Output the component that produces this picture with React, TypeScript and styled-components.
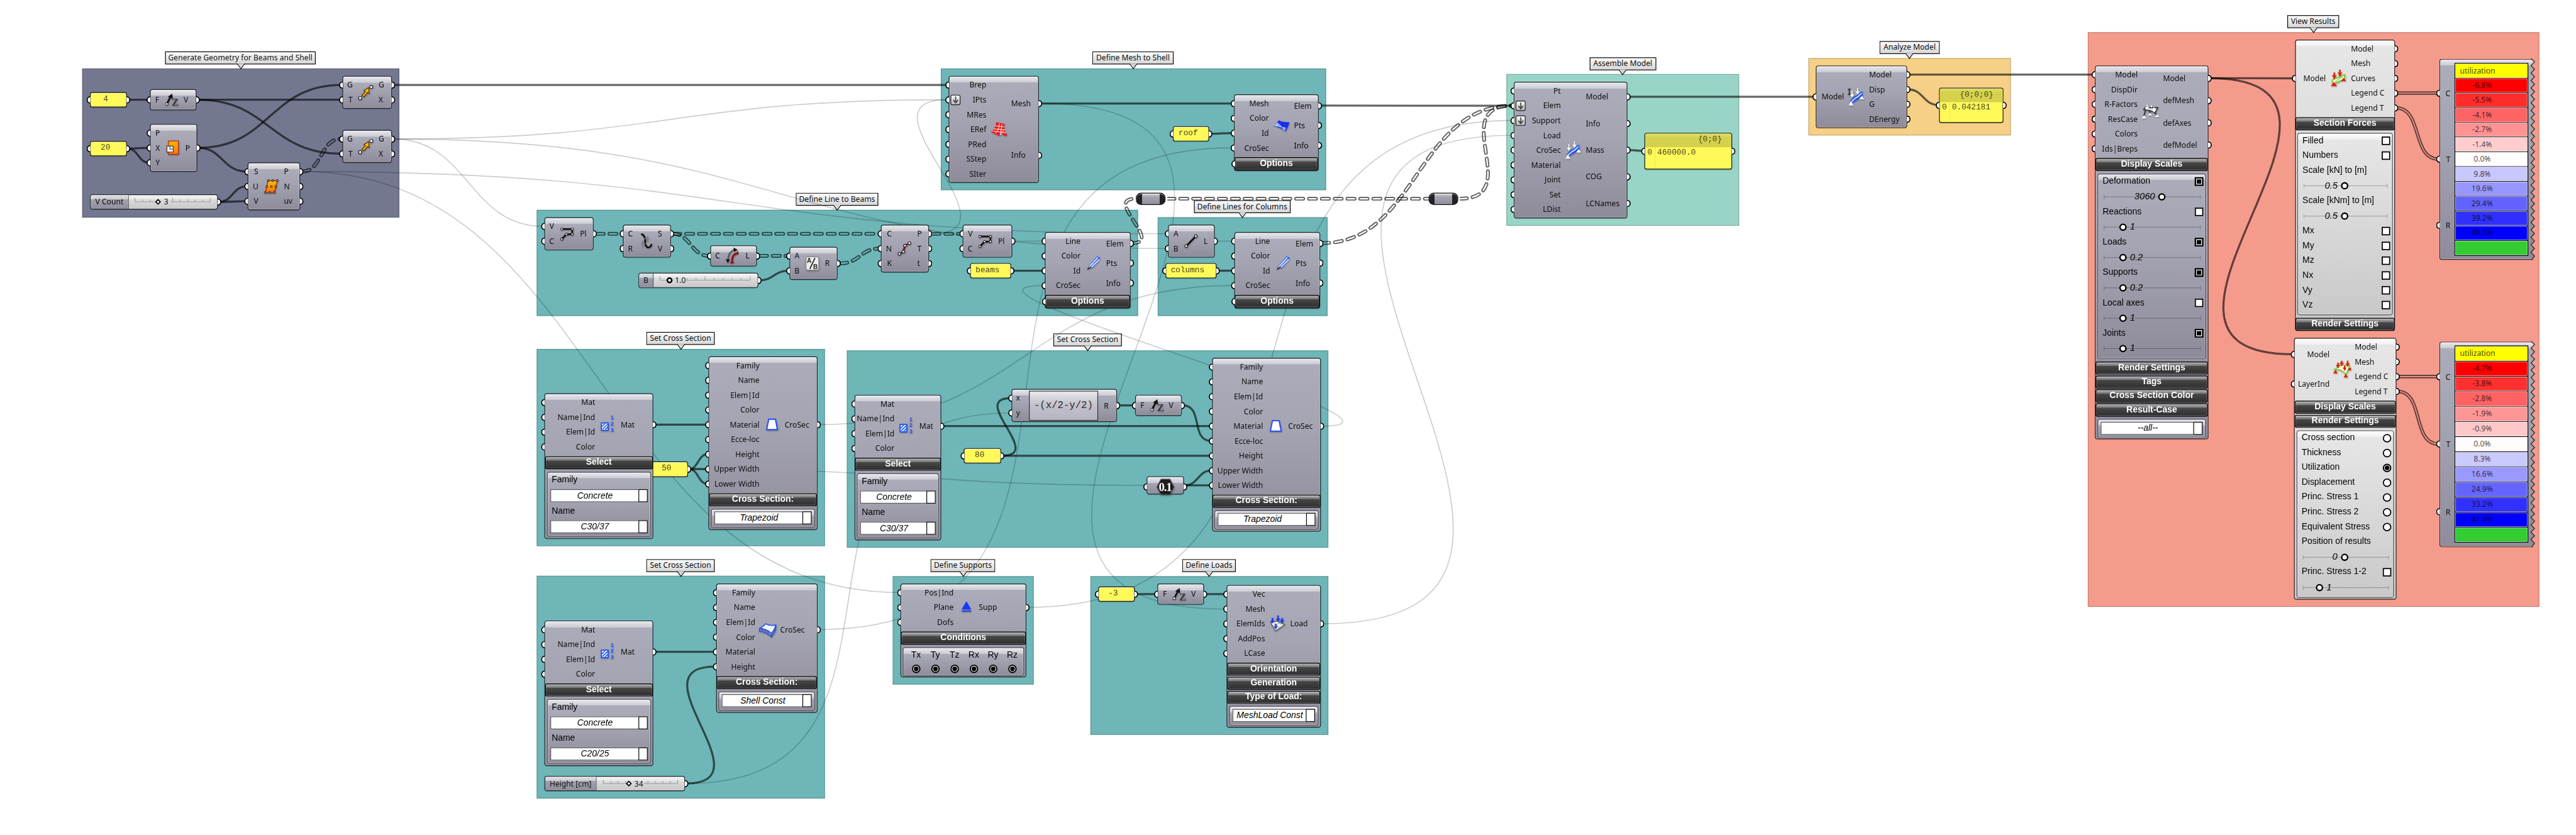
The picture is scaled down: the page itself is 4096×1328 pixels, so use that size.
import React from "react";
import styled, { createGlobalStyle, css } from "styled-components";

const CANVAS_W = 6960;
const CANVAS_H = 2257;
const ZOOM = 4096 / 6960;

const uiFont = `"Noto Sans", "Open Sans", sans-serif`;
const widgetFont = `"Liberation Sans", Arial, sans-serif`;
const monoFont = `"Liberation Mono", "Courier New", monospace`;

const GlobalStyle = createGlobalStyle`
  html, body { margin: 0; padding: 0; background: #fff; overflow: hidden; }
  *, *::before, *::after { box-sizing: border-box; }
`;

/* ---------- canvas ---------- */

const Viewport = styled.main`
  width: 4096px;
  height: 1328px;
  overflow: hidden;
  background: #fff;
`;

const Canvas = styled.div`
  position: relative;
  width: ${CANVAS_W}px;
  height: ${CANVAS_H}px;
  transform: scale(${ZOOM});
  transform-origin: 0 0;
  font: 20.6px/1 ${uiFont};
  color: #0c0c0c;
`;

type Rect = { x: number; y: number; w: number; h: number };

const Group = styled.section<Rect & { $fill: string }>`
  position: absolute;
  left: ${(p) => p.x}px;
  top: ${(p) => p.y}px;
  width: ${(p) => p.w}px;
  height: ${(p) => p.h}px;
  background: ${(p) => p.$fill};
  border: 2px solid rgba(0, 0, 0, 0.2);
`;

const CalloutBox = styled.div<{ $x: number; $y: number; $w: number }>`
  position: absolute;
  left: ${(p) => p.$x}px;
  top: ${(p) => p.$y}px;
  width: ${(p) => p.$w}px;
  height: 35px;
  display: flex;
  align-items: center;
  justify-content: center;
  background: linear-gradient(#fbfbfb, #d6d6d6);
  border: 2px solid #000;
  white-space: nowrap;
  padding-bottom: 2px;
`;

const CalloutTip = styled.svg<{ $left: number }>`
  position: absolute;
  left: ${(p) => p.$left}px;
  top: 31px;
  width: 24px;
  height: 16px;
`;

function Callout({ x, y, w, tip, children }: { x: number; y: number; w: number; tip: number; children: string }) {
  return (
    <CalloutBox $x={x} $y={y} $w={w}>
      {children}
      <CalloutTip $left={tip - x - 14} viewBox="0 0 24 16">
        <path d="M1.5 -1 L12 14 L22.5 -1 Z" fill="#d8d8d8" />
        <path d="M1 0.5 L2.5 1 L12 14 L21.5 1 L23 0.5" fill="none" stroke="#000" strokeWidth="1.8" />
      </CalloutTip>
    </CalloutBox>
  );
}

/* ---------- wires ---------- */

const WireLayer = styled.svg`
  position: absolute;
  left: 0;
  top: 0;
  width: ${CANVAS_W}px;
  height: ${CANVAS_H}px;
`;

type WireKind = "item" | "faint" | "list" | "tree";
type WireSpec = { k: WireKind; a: [number, number]; b: [number, number]; c?: number };

function wirePath({ a, b, c }: WireSpec) {
  const dx = b[0] - a[0];
  const dy = Math.abs(b[1] - a[1]);
  const reach = c ?? (dx < 0 ? -dx * 0.47 : Math.max(dx / 2, dy > dx ? dy * 0.71 : dx / 2));
  return `M${a[0]} ${a[1]} C${a[0] + reach} ${a[1]} ${b[0] - reach} ${b[1]} ${b[0]} ${b[1]}`;
}

function Wire({ spec, id }: { spec: WireSpec; id: string }) {
  const d = wirePath(spec);
  if (spec.k === "item") return <path d={d} fill="none" stroke="#000" strokeOpacity="0.6" strokeWidth="5.6" />;
  if (spec.k === "faint") return <path d={d} fill="none" stroke="#000" strokeOpacity="0.2" strokeWidth="2.8" />;
  const tree = spec.k === "tree";
  const dash = tree ? { strokeDasharray: "19 15.8", strokeLinecap: "round" as const } : {};
  return (
    <g>
      <mask id={id} maskUnits="userSpaceOnUse" x="0" y="0" width={CANVAS_W} height={CANVAS_H}>
        <path d={d} fill="none" stroke="#fff" strokeWidth={tree ? 10.5 : 9.4} {...dash} />
        <path d={d} fill="none" stroke="#000" strokeWidth={tree ? 3.8 : 2.6} {...dash} />
      </mask>
      <path d={d} fill="none" stroke="#000" strokeOpacity="0.6" strokeWidth="12" mask={`url(#${id})`} />
    </g>
  );
}

const wires: WireSpec[] = [
  { k: "item", a: [345, 269.6], b: [402, 269.6] },
  { k: "item", a: [534, 269.6], b: [922, 269.6] },
  { k: "item", a: [534, 269.6], b: [922, 415.3] },
  { k: "item", a: [345, 401.6], b: [402, 399.5] },
  { k: "item", a: [345, 401.6], b: [402, 439.5] },
  { k: "item", a: [536, 399.5], b: [922, 229.5] },
  { k: "item", a: [536, 399.5], b: [666, 463.5] },
  { k: "item", a: [592, 545.5], b: [666, 503.6] },
  { k: "item", a: [592, 545.5], b: [666, 543.8] },
  { k: "tree", a: [818, 463.5], b: [918, 375.7] },
  { k: "item", a: [1062, 229.5], b: [2560, 229.5] },
  { k: "faint", a: [1064, 375.7], b: [2560, 269.5] },
  { k: "faint", a: [1064, 375.7], b: [1468, 611.7] },
  { k: "faint", a: [1064, 375.7], b: [3154, 671.7] },
  { k: "faint", a: [816, 463.5], b: [3154, 631.7] },
  { k: "faint", a: [816, 463.5], b: [2430, 1601.3] },
  { k: "faint", a: [2516, 631.7], b: [2558, 269.5] },
  { k: "item", a: [2810, 279.6], b: [3332, 279.6] },
  { k: "faint", a: [2812, 279.6], b: [3311, 1646], c: 1000 },
  { k: "item", a: [3270, 361.4], b: [3332, 359.6] },
  { k: "faint", a: [2214, 1701], b: [3331, 399.6], c: 950 },
  { k: "item", a: [3566, 285.4], b: [4087, 285.7] },
  { k: "tree", a: [1612, 631.7], b: [1678, 631.7] },
  { k: "tree", a: [1819, 631.7], b: [2377, 631.7] },
  { k: "tree", a: [1817, 631.7], b: [1916, 691.5] },
  { k: "tree", a: [2053, 691.5], b: [2130, 691.5] },
  { k: "tree", a: [2270, 711.7], b: [2377, 671.7] },
  { k: "item", a: [2052, 757.5], b: [2130, 731.6] },
  { k: "tree", a: [2519, 631.7], b: [2598, 631.7] },
  { k: "faint", a: [2738, 651.7], b: [2820, 651.7] },
  { k: "item", a: [2735, 731.6], b: [2820, 731.6] },
  { k: "faint", a: [3286, 651.7], b: [3332, 651.7] },
  { k: "item", a: [3289, 731.6], b: [3332, 731.6] },
  { k: "tree", a: [3058, 657], b: [3068, 537], c: 88 },
  { k: "tree", a: [3154, 537], b: [3861, 537] },
  { k: "tree", a: [3944, 537], b: [4085, 285.7], c: 178 },
  { k: "tree", a: [3572, 657], b: [4085, 285.7] },
  { k: "faint", a: [2214, 1147.7], b: [3331, 771.7] },
  { k: "faint", a: [3572, 1151.6], b: [2819, 771.7] },
  { k: "item", a: [1769, 1147.7], b: [1911, 1147.7] },
  { k: "item", a: [1862, 1267.6], b: [1911, 1227.6] },
  { k: "item", a: [1862, 1267.6], b: [1911, 1267.6] },
  { k: "item", a: [1862, 1267.6], b: [1911, 1307.6] },
  { k: "faint", a: [1862, 1267.6], b: [3096, 1311.6] },
  { k: "item", a: [2546, 1151.6], b: [3272, 1151.6] },
  { k: "item", a: [2708, 1231.6], b: [2731, 1076], c: 114 },
  { k: "item", a: [2708, 1231.6], b: [3272, 1231.6] },
  { k: "item", a: [3020, 1095.6], b: [3064, 1095.6] },
  { k: "item", a: [3196, 1095.6], b: [3272, 1191.6], c: 56 },
  { k: "item", a: [3202, 1311.6], b: [3272, 1271.6] },
  { k: "item", a: [3202, 1311.6], b: [3272, 1311.6] },
  { k: "item", a: [1769, 1761.4], b: [1932, 1761.4] },
  { k: "item", a: [1854, 2117.4], b: [1932, 1801.4] },
  { k: "faint", a: [1856, 2117.4], b: [2730, 1116], c: 720 },
  { k: "faint", a: [2776, 1641.3], b: [4087, 325.7], c: 945 },
  { k: "faint", a: [3571, 1685.7], b: [4087, 365.7], c: 965 },
  { k: "item", a: [3070, 1605.6], b: [3125, 1605.6] },
  { k: "item", a: [3256, 1605.6], b: [3312, 1605.6] },
  { k: "item", a: [4400, 261.6], b: [4903, 261.6] },
  { k: "item", a: [4400, 405.5], b: [4440, 407.6] },
  { k: "item", a: [5156, 201.6], b: [5658, 201.6] },
  { k: "item", a: [5156, 241.7], b: [5237, 283.6] },
  { k: "item", a: [5971, 211.4], b: [6198, 211.6] },
  { k: "item", a: [5971, 211.4], b: [6196, 957.4], c: 545 },
  { k: "list", a: [6474, 251.4], b: [6588, 251.6] },
  { k: "list", a: [6474, 291.4], b: [6588, 430], c: 72 },
  { k: "list", a: [6478, 1017.6], b: [6588, 1017.6] },
  { k: "list", a: [6478, 1057.6], b: [6588, 1199.8], c: 72 },
];

/* ---------- shared node chrome ---------- */

type Tone = "dark" | "light";

const glossy = css<{ $tone?: Tone }>`
  background: ${(p) =>
    p.$tone === "light"
      ? "linear-gradient(#fdfdfd 0, #f0f0f0 16px, #e6e6e6 16px, #c9c9c9 100%)"
      : "linear-gradient(#f0f0f3 0, #e0e0e6 4px, #cbcbd4 16px, #acabb9 16px, #a5a4b2 40%, #8e8c9a 100%)"};
`;

const NodeBox = styled.article<{ $x: number; $y: number; $w: number; $h: number; $tone?: Tone }>`
  position: absolute;
  left: ${(p) => p.$x}px;
  top: ${(p) => p.$y}px;
  width: ${(p) => p.$w}px;
  height: ${(p) => p.$h}px;
  display: flex;
  flex-direction: column;
  border: 2px solid #26262a;
  border-radius: 7px;
  box-shadow: inset 0 0 0 1.5px rgba(255, 255, 255, 0.3), 0 1.5px 1px rgba(0, 0, 0, 0.25);
  padding-top: 2.5px;
  ${glossy}
`;

const Ports = styled.div<{ $in: number; $out: number; $h?: number }>`
  display: grid;
  grid-template-columns: ${(p) => p.$in - 2}px 1fr ${(p) => p.$out - 2}px;
  ${(p) => (p.$h ? `height: ${p.$h}px; flex: none;` : "flex: 1; margin-bottom: 2.5px;")}
`;

const PortColumn = styled.div`
  display: flex;
  flex-direction: column;
  min-width: 0;
`;

const Port = styled.div<{ $side: "in" | "out" }>`
  position: relative;
  flex: 1;
  display: flex;
  align-items: center;
  justify-content: ${(p) => (p.$side === "in" ? "flex-end" : "flex-start")};
  white-space: nowrap;
`;

const Grip = styled.i<{ $side: "in" | "out" }>`
  position: absolute;
  top: calc(50% - 10px);
  width: 10px;
  height: 20px;
  background: #fff;
  border: 3.6px solid #000;
  ${(p) =>
    p.$side === "in"
      ? "left: -11px; border-right: 0; border-radius: 10px 0 0 10px;"
      : "right: -11px; border-left: 0; border-radius: 0 10px 10px 0;"}
`;

const IconCell = styled.div`
  display: flex;
  align-items: center;
  justify-content: center;
  min-width: 0;
  overflow: visible;
`;

const IconSvg = styled.svg`
  flex: none;
  width: 48px;
  height: 48px;
  overflow: visible;
  filter: drop-shadow(1px 2px 1.5px rgba(0, 0, 0, 0.35));
`;

const Expander = styled.span`
  position: absolute;
  left: 3px;
  top: calc(50% - 14px);
  width: 27px;
  height: 28px;
  display: flex;
  align-items: center;
  justify-content: center;
  border: 2px solid #222;
  border-radius: 5px;
  background: linear-gradient(#fafafa, #b9b9b9);
`;

const Bar = styled.div`
  position: relative;
  height: 35.4px;
  flex: none;
  display: flex;
  align-items: center;
  justify-content: center;
  padding-bottom: 3px;
  border: 2px solid #000;
  border-radius: 5px;
  box-shadow: inset 0 0 0 1.5px rgba(255, 255, 255, 0.25);
  background: linear-gradient(#b8b8b8 0, #6f6f6f 10px, #484848 10px, #2e2e2e 100%);
  color: #fff;
  font: bold 23.7px/1 ${widgetFont};
  white-space: nowrap;
`;

const Bars = styled.div<{ $first?: boolean }>`
  display: flex;
  flex-direction: column;
  gap: 2.4px;
  flex: none;
  margin: ${(p) => (p.$first ? "5.5px" : "7px")} -0.5px 0;
`;

const Sheet = styled.div<{ $tone?: Tone }>`
  display: flex;
  flex-direction: column;
  flex: none;
  margin: 6.5px 4.5px 0;
  padding: 0 5px 5px 8px;
  border: 2px solid #55555c;
  border-radius: 7px;
  box-shadow: inset 0 0 0 1.5px rgba(255, 255, 255, 0.35);
  font: 23.7px/1 ${widgetFont};
  color: #000;
  ${glossy}
`;

const FieldLabel = styled.div`
  height: 40px;
  display: flex;
  align-items: center;
  padding-left: 3px;
`;

const Field = styled.div`
  height: 35px;
  margin: 5.6px 2px 3px -1px;
  flex: none;
  display: grid;
  grid-template-columns: 1fr 21px;
  background: #fff;
  border: 2px solid #555;
  font-style: italic;
  white-space: nowrap;
`;

const FieldValue = styled.span`
  display: flex;
  align-items: center;
  justify-content: center;
  min-width: 0;
`;

const FieldButton = styled.span`
  border: 2px solid #000;
  margin: -2px;
  background: #fff;
`;

const OptionRow = styled.div`
  height: 40px;
  flex: none;
  display: flex;
  align-items: center;
  justify-content: space-between;
  padding-left: 4px;
  white-space: nowrap;
  & > span { padding-bottom: 3px; }
`;

const Check = styled.i<{ $on?: boolean }>`
  width: 23px;
  height: 23px;
  border: 3px solid #000;
  background: ${(p) => (p.$on ? "#000" : "#fff")};
  box-shadow: ${(p) => (p.$on ? "inset 0 0 0 2.5px #fff" : "none")};
`;

const Radio = styled.i<{ $on?: boolean }>`
  width: 23px;
  height: 23px;
  border: 3.4px solid #000;
  border-radius: 50%;
  background: ${(p) => (p.$on ? "#000" : "#fff")};
  box-shadow: ${(p) => (p.$on ? "inset 0 0 0 2.2px #fff" : "none")};
`;

const KnobRow = styled.div`
  height: 42px;
  flex: none;
  position: relative;
  margin: 0 7px 0 7px;
  display: flex;
  align-items: center;
  font: italic 25px/1 ${widgetFont};
  &::before {
    content: "";
    position: absolute;
    left: 0;
    right: 0;
    top: 16px;
    height: 11px;
    border: solid rgba(0, 0, 0, 0.25);
    border-width: 0 2px;
    background: linear-gradient(rgba(0, 0, 0, 0.25), rgba(0, 0, 0, 0.25)) 0 50% / 100% 2px no-repeat;
  }
`;

const KnobGroup = styled.span<{ $pad: number; $first: "value" | "knob" }>`
  position: relative;
  display: flex;
  align-items: center;
  justify-content: ${(p) => (p.$first === "value" ? "flex-start" : "flex-end")};
  gap: 9px;
  padding-left: ${(p) => p.$pad}px;
  flex-direction: ${(p) => (p.$first === "value" ? "row" : "row-reverse")};
  & > span { padding-bottom: 2px; }
`;

const Knob = styled.i`
  width: 20px;
  height: 20px;
  border: 4.4px solid #000;
  border-radius: 50%;
  background: #fff;
`;

function KnobSlider({ value, pad, first }: { value: string; pad: number; first: "value" | "knob" }) {
  return (
    <KnobRow>
      <KnobGroup $pad={pad} $first={first}>
        <span>{value}</span>
        <Knob />
      </KnobGroup>
    </KnobRow>
  );
}

type NodeProps = {
  x: number;
  y: number;
  w: number;
  h: number;
  ins: string[];
  outs: string[];
  inW: number;
  outL: number;
  icon: React.ReactNode;
  tone?: Tone;
  expand?: string[];
  portsH?: number;
  children?: React.ReactNode;
};

function Node({ x, y, w, h, ins, outs, inW, outL, icon, tone, expand = [], portsH, children }: NodeProps) {
  return (
    <NodeBox $x={x} $y={y} $w={w} $h={h} $tone={tone}>
      <Ports $in={inW} $out={w - outL} $h={portsH}>
        <PortColumn>
          {ins.map((n) => (
            <Port key={n} $side="in">
              <Grip $side="in" />
              {expand.includes(n) && (
                <Expander>
                  <svg width="20" height="22" viewBox="0 0 20 22">
                    <path d="M10 2V17M3.5 11L10 19L16.5 11" fill="none" stroke="#444" strokeWidth="3" />
                  </svg>
                </Expander>
              )}
              {n}
            </Port>
          ))}
        </PortColumn>
        <IconCell>{icon}</IconCell>
        <PortColumn>
          {outs.map((n) => (
            <Port key={n} $side="out">
              {n}
              <Grip $side="out" />
            </Port>
          ))}
        </PortColumn>
      </Ports>
      {children}
    </NodeBox>
  );
}

function Drop({ children }: { children: string }) {
  return (
    <Field>
      <FieldValue>{children}</FieldValue>
      <FieldButton />
    </Field>
  );
}

/* ---------- icons (48 × 48 each) ---------- */

const Dot = ({ x, y, r = 3.6 }: { x: number; y: number; r?: number }) => (
  <circle cx={x} cy={y} r={r} fill="#fff" stroke="#222" strokeWidth="2" />
);

const IconVectorZ = () => (
  <IconSvg viewBox="0 0 48 48">
    <path d="M12 34L22 15" stroke="#111" strokeWidth="4.6" />
    <path d="M26 7L27.5 21L14.5 15.5Z" fill="#111" />
    <circle cx="11.5" cy="35" r="3.4" fill="#fff" stroke="#111" strokeWidth="1.6" />
    <text x="25" y="40" fontFamily="Liberation Serif, serif" fontWeight="bold" fontSize="28" fill="#3a3a3e">Z</text>
  </IconSvg>
);

const IconMove = () => (
  <IconSvg viewBox="0 0 48 48">
    <path d="M17.5 35L13 29.5L23.5 22L20 18L33.5 12L33 28L29 24.5Z" transform="rotate(-8 24 24)" fill="#f9b208" stroke="#4d3305" strokeWidth="2" />
    <Dot x={9} y={39} r={4.2} />
    <Dot x={39} y={9} r={4.2} />
  </IconSvg>
);

const IconPlane = () => (
  <IconSvg viewBox="0 0 48 48">
    <defs>
      <linearGradient id="plane-fill" x1="0" y1="0" x2="0" y2="1">
        <stop offset="0" stopColor="#ffb400" />
        <stop offset="1" stopColor="#ff7400" />
      </linearGradient>
    </defs>
    <rect x="12" y="5" width="27" height="36" fill="url(#plane-fill)" stroke="#b3200c" strokeWidth="2" />
    <rect x="8" y="19" width="17" height="16" fill="#eee" stroke="#444" strokeWidth="2" />
    <path d="M16 20V27H24" stroke="#555" strokeWidth="2" fill="none" />
  </IconSvg>
);

const IconDivideSurface = () => (
  <IconSvg viewBox="0 0 48 48">
    <defs>
      <linearGradient id="surf-fill" x1="0" y1="0" x2="0" y2="1">
        <stop offset="0" stopColor="#ffc000" />
        <stop offset="1" stopColor="#ff7000" />
      </linearGradient>
    </defs>
    <path d="M16 8H40C37 19 37 28 32 40H8C12 29 11 20 16 8Z" fill="url(#surf-fill)" stroke="#b3200c" strokeWidth="2" />
    {[[16, 8], [28, 8], [40, 8], [12, 24], [24, 24], [36, 24], [8, 40], [20, 40], [32, 40]].map(([x, y]) => (
      <Dot key={`${x}-${y}`} x={x} y={y} r={2.3} />
    ))}
  </IconSvg>
);

const IconPolyline = () => (
  <IconSvg viewBox="0 0 48 48">
    <path d="M10 11H38V25H22L10 38" fill="none" stroke="#0a0a0a" strokeWidth="4.4" />
    {[[10, 11], [38, 11], [38, 25], [22, 25], [10, 38]].map(([x, y]) => (
      <Dot key={`${x}-${y}`} x={x} y={y} r={3} />
    ))}
  </IconSvg>
);

const IconExplode = () => (
  <IconSvg viewBox="0 0 48 48">
    <path d="M14 5C19 7 21 10 22 14M23 20V28M24 33C26 42 37 44 40 33" fill="none" stroke="#0a0a0a" strokeWidth="4.4" strokeLinecap="round" />
    <path d="M26 16L32 11M27 18H34M26 20L31 24M19 28L14 24M18 31H12M19 34L15 39" stroke="#666" strokeWidth="1.8" />
  </IconSvg>
);

const IconLength = () => (
  <IconSvg viewBox="0 0 48 48">
    <path d="M11 36C11 22 16 10 30 7" fill="none" stroke="#55555a" strokeWidth="3.4" />
    <path d="M26 1L37 7L27 13ZM5 33H16L10.5 43Z" fill="#111" />
    <path d="M22 42C22 30 22 20 37 16" fill="none" stroke="#8c1010" strokeWidth="5" />
    <path d="M17 42H27M37 11V20" stroke="#8c1010" strokeWidth="3" />
  </IconSvg>
);

const IconDivision = () => (
  <IconSvg viewBox="0 0 48 48">
    <rect x="7" y="6" width="34" height="36" rx="5" fill="#ececec" stroke="#888" strokeWidth="2" />
    <path d="M31 9L17 39" stroke="#111" strokeWidth="2.6" />
    <text x="9" y="23" fontFamily="Liberation Sans, Arial, sans-serif" fontSize="17" fontWeight="bold" fill="#222">A</text>
    <text x="26" y="39" fontFamily="Liberation Sans, Arial, sans-serif" fontSize="17" fontWeight="bold" fill="#222">B</text>
  </IconSvg>
);

const IconDivideCurve = () => (
  <IconSvg viewBox="0 0 48 48">
    <path d="M10 38C16 36 20 33 21 31M24 16C28 14 33 12 37 9" fill="none" stroke="#8c1010" strokeWidth="4" />
    <path d="M21 31C23 25 23 20 25 16" fill="none" stroke="#5c0c0c" strokeWidth="4" />
    <Dot x={10} y={38} />
    <Dot x={21} y={32} />
    <Dot x={25} y={16} />
    <Dot x={37} y={9} />
  </IconSvg>
);

const IconLine = () => (
  <IconSvg viewBox="0 0 48 48">
    <path d="M11 37L37 10" stroke="#0a0a0a" strokeWidth="4.6" />
    <Dot x={11} y={37} />
    <Dot x={37} y={10} />
  </IconSvg>
);

const IconMeshRed = () => (
  <IconSvg viewBox="0 0 48 48">
    <path d="M17 4L39 9L38 25L47 41L36 40L33 34L25 41L3 31C11 24 15 16 17 4Z" fill="#f01818" />
    <path d="M14 14L38 17M10 22L39 25M7 28L43 33M25 7C25 18 22 28 14 34M32 9C31 20 30 30 27 39M37 27L28 38" stroke="#fff" strokeWidth="1.6" fill="none" />
  </IconSvg>
);

const IconShellBlue = () => (
  <IconSvg viewBox="0 0 48 48">
    <path d="M17 9C27 15 36 13 46 15C43 24 40 32 35 39C27 31 14 27 3 24C10 21 14 15 17 9Z" fill="#1c2df2" />
    <path d="M14 16C20 21 24 22 25 29C19 26 12 25 5 24Z" fill="#dfeaff" />
    <path d="M26 26L36 29L34 38L26 31Z" fill="#8db4ff" />
    <path d="M10 20L24 25M18 18L16 27" stroke="#3d7cff" strokeWidth="1.5" />
  </IconSvg>
);

const IconBeam = () => (
  <IconSvg viewBox="0 0 48 48">
    <path d="M7 42L13 30L18 35Z" fill="#111" />
    <path d="M12 30L34 5L42 8L40 15L20 37Z" fill="#2a62ff" />
    <path d="M15 31L36 8M19 34L40 13" stroke="#e3ecff" strokeWidth="3" />
    <path d="M12 36L17 27" stroke="#ccc" strokeWidth="2.6" />
  </IconSvg>
);

const IconMaterial = () => (
  <IconSvg viewBox="0 0 48 48">
    <rect x="6" y="19" width="18" height="20" fill="#f4f7ff" stroke="#1450ee" strokeWidth="3" />
    <path d="M8 29L15 21M9 36L22 23M16 37L23 30" stroke="#1450ee" strokeWidth="2.6" />
    <g fill="#1f4cf5" fontFamily="Liberation Sans, Arial, sans-serif" fontWeight="bold" fontSize="14.5">
      <text x="31" y="10">1</text>
      <text x="31" y="26">2</text>
      <text x="31" y="43">3</text>
    </g>
  </IconSvg>
);

const IconTrapezoid = () => (
  <IconSvg viewBox="0 0 48 48">
    <path d="M15 9H33L38.5 37H9.5Z" fill="#fff" stroke="#1f4cf5" strokeWidth="3.2" />
  </IconSvg>
);

const IconShellSection = () => (
  <IconSvg viewBox="0 0 48 48">
    <path d="M2 20C8 18 14 13 18 8C28 13 38 13 46 11C44 19 41 27 34 33C24 24 14 21 2 20Z" fill="#eef3ff" stroke="#1f4cf5" strokeWidth="2.4" />
    <path d="M2 20V28C14 29 24 34 34 43V33M46 11V20C44 28 40 37 34 43M9 21V29M17 23V31M25 27V35" fill="none" stroke="#1f4cf5" strokeWidth="2.4" />
  </IconSvg>
);

const IconSupport = () => (
  <IconSvg viewBox="0 0 48 48">
    <path d="M24 7L37 29H11Z" fill="#1638ff" />
    <path d="M11 33.5H37" stroke="#1638ff" strokeWidth="3" />
  </IconSvg>
);

const IconMeshLoad = () => (
  <IconSvg viewBox="0 0 48 48">
    <path d="M5 20L24 17L43 26L18 43Z" fill="#f4f4f4" stroke="#555" strokeWidth="2" />
    <path d="M12 30L32 20M14 22L30 34M24 18L38 29" stroke="#888" strokeWidth="1.6" />
    <g fill="#1638ff">
      <path d="M8 8H12V15H15.5L10 23L4.5 15H8Z" />
      <path d="M23 1H27V10H31L25 18L19 10H23Z" />
      <path d="M34 8H38V14H41.5L36 23L30.5 14H34Z" />
      <path d="M17 24H21V31H24.5L19 39L13.5 31H17Z" />
    </g>
  </IconSvg>
);

const ModelGlyph = () => (
  <>
    <path d="M6 34C12 31 13 24 22 21C30 18 31 12 40 9V22C33 24 31 30 24 33C17 36 15 40 8 42Z" fill="#1f55ff" />
    <path d="M9 37C17 33 17 28 25 25C31 22 33 17 38 14" fill="none" stroke="#fff" strokeWidth="2.6" />
    <path d="M9 35L16 47H3Z" fill="#fff" />
    <path d="M38 21L45 30H32Z" fill="#fff" />
    <path d="M12 7V19M27 0V12" stroke="#fff" strokeWidth="2.6" />
    <path d="M6.5 17H17.5L12 26ZM21.5 9H32.5L27 18Z" fill="#fff" />
  </>
);

const IconAssemble = () => (
  <IconSvg viewBox="0 0 48 48">
    <ModelGlyph />
  </IconSvg>
);

const IconAnalyze = () => (
  <IconSvg viewBox="0 0 48 48">
    <ModelGlyph />
    <path d="M1 3H8M4.5 3V17M1 17H8" stroke="#222" strokeWidth="2.4" />
  </IconSvg>
);

const IconModelView = () => (
  <IconSvg viewBox="0 0 48 48">
    <path d="M6 18L12 10C22 16 32 12 44 13L36 27C28 20 17 21 6 18Z" fill="#d5d5da" stroke="#222" strokeWidth="2.4" />
    <path d="M11 20L6 36M22 20L23 30M36 26L42 34" stroke="#222" strokeWidth="2.6" />
    <path d="M15 5V13M27 6V12M34 12V19" stroke="#fff" strokeWidth="3" />
    <path d="M9 11H21L15 18ZM28 18H40L34 26Z" fill="#fff" />
    <path d="M7 34L14 42H0ZM23 27L29 34H17ZM42 31L48 38H36Z" fill="#fff" />
  </IconSvg>
);

const IconBeamView = () => (
  <IconSvg viewBox="0 0 48 48">
    <path d="M8 28L41 14V25L8 40Z" fill="#fff" stroke="#79c61c" strokeWidth="3" />
    <path d="M15 33L35 19" stroke="#79c61c" strokeWidth="2" />
    <path d="M13 8V18M28 0V12" stroke="#e3200f" strokeWidth="4" />
    <path d="M7 15H19L13 27ZM22 8H34L28 20Z" fill="#e3200f" />
    <path d="M12 33L20 45H4ZM38 22L45 31H31Z" fill="#e3200f" />
  </IconSvg>
);

const IconShellView = () => (
  <IconSvg viewBox="0 0 48 48">
    <path d="M4 24C14 18 18 14 24 14C34 13 38 15 44 16C40 24 38 30 34 38C26 26 18 24 4 24Z" fill="#fff" stroke="#8cd022" strokeWidth="3" />
    <path d="M13 6V14M23 1V9M39 1V10M31 14V22" stroke="#e3200f" strokeWidth="4" />
    <path d="M7.5 12H18.5L13 22ZM17.5 6H28.5L23 16ZM33.5 8H44.5L39 18ZM25.5 19H36.5L31 29ZM6 25L12 35H0ZM34 36L40 46H28ZM43 20H48V27H40Z" fill="#e3200f" />
  </IconSvg>
);

const IconNumber = () => (
  <IconSvg viewBox="0 0 48 48">
    <path d="M12 3H36L47 24L36 45H12L1 24Z" fill="#1d1d1f" stroke="#555" strokeWidth="2" />
    <text x="24" y="35" textAnchor="middle" fontFamily="Liberation Serif, serif" fontWeight="bold" fontSize="32" textLength="36" fill="#fff">0.1</text>
  </IconSvg>
);

/* ---------- yellow panels ---------- */

const PanelBox = styled.article<{ $x: number; $y: number; $w: number; $h: number }>`
  position: absolute;
  left: ${(p) => p.$x}px;
  top: ${(p) => p.$y}px;
  width: ${(p) => p.$w}px;
  height: ${(p) => p.$h}px;
  display: flex;
  flex-direction: column;
  border: 2px solid #1c1c1c;
  border-radius: 6px;
  background: #fff95a;
  box-shadow: inset 0 2px 1px rgba(255, 255, 255, 0.6), 0 1.5px 1px rgba(0, 0, 0, 0.25);
  font: 21.6px/1 ${monoFont};
  color: #45451c;
`;

const PanelText = styled.div<{ $pad: number }>`
  flex: 1;
  display: flex;
  align-items: center;
  padding: 0 0 4px ${(p) => p.$pad}px;
  white-space: pre;
`;

const PanelHead = styled.div`
  height: 37px;
  flex: none;
  display: flex;
  align-items: center;
  justify-content: flex-end;
  padding: 0 25px 3px 0;
  background: linear-gradient(#e2dd6c 0, #d6d14c 30%);
  border-radius: 4px 4px 0 0;
`;

const PanelRow = styled.div`
  flex: 1;
  display: grid;
  grid-template-columns: 27px 1fr;
  line-height: 28px;
  & > span { padding-left: 6px; }
  & > span:first-child { border-right: 1.5px solid rgba(0, 0, 0, 0.12); }
`;

function Panel({ x, y, w, h = 41, pad, children }: { x: number; y: number; w: number; h?: number; pad: number; children: string }) {
  return (
    <PanelBox $x={x} $y={y} $w={w} $h={h}>
      <Grip $side="in" />
      <PanelText $pad={pad}>{children}</PanelText>
      <Grip $side="out" />
    </PanelBox>
  );
}

function ListPanel({ x, y, w, h, path, value }: Rect & { path: string; value: string }) {
  return (
    <PanelBox $x={x} $y={y} $w={w} $h={h}>
      <Grip $side="in" />
      <PanelHead>{path}</PanelHead>
      <PanelRow>
        <span>0</span>
        <span>{value}</span>
      </PanelRow>
      <Grip $side="out" />
    </PanelBox>
  );
}

/* ---------- number sliders ---------- */

const SliderBox = styled(NodeBox)`
  flex-direction: row;
  padding-top: 0;
  background: linear-gradient(#f6f6f6 0, #e6e6e6 12px, #dcdcdc 12px, #c8c8c8 100%);
`;

const SliderLabel = styled.div<{ $w: number }>`
  width: ${(p) => p.$w}px;
  display: flex;
  align-items: center;
  justify-content: center;
  border-right: 2px solid #333;
  border-radius: 5px 0 0 5px;
  background: linear-gradient(#e2e2e6 0, #c9c9d0 12px, #a2a1ae 12px, #918f9d 100%);
  white-space: nowrap;
`;

const SliderTrack = styled.div`
  flex: 1;
  position: relative;
  svg { position: absolute; left: 0; top: 0; width: 100%; height: 100%; overflow: visible; }
`;

const SliderValue = styled.span<{ $left: number }>`
  position: absolute;
  left: ${(p) => p.$left}px;
  top: 8px;
  line-height: 20px;
`;

type SliderProps = {
  x: number; y: number; w: number; labelW: number; label: string; value: string;
  from: number; to: number; knob: number; shape: "diamond" | "circle"; text: number; hideTo: number;
};

function NumberSlider({ x, y, w, labelW, label, value, from, to, knob, shape, text, hideTo }: SliderProps) {
  const ticks = Array.from({ length: 11 }, (_, i) => ({ x: from + ((to - from) * i) / 10, major: i % 5 === 0 }));
  const hidden = (tx: number) => tx > knob - 8 && tx < hideTo;
  return (
    <SliderBox $x={x} $y={y} $w={w} $h={41}>
      <SliderLabel $w={labelW - 2}>{label}</SliderLabel>
      <SliderTrack>
        <svg>
          <g stroke="#9a9a9a" strokeWidth="1.8" fill="none">
            <path d={`M${from} 18.5H${knob - 8}M${hideTo} 18.5H${to}`} />
            {ticks.filter((t) => !hidden(t.x)).map((t) => (
              <path key={t.x} d={`M${t.x} 18.5V${t.major ? 8 : 12}`} />
            ))}
          </g>
          {shape === "diamond" ? (
            <path d={`M${knob} 12.5L${knob + 6} 18.5L${knob} 24.5L${knob - 6} 18.5Z`} fill="#fff" stroke="#000" strokeWidth="3" />
          ) : (
            <circle cx={knob} cy="18.5" r="6" fill="#fff" stroke="#000" strokeWidth="4.4" />
          )}
        </svg>
        <SliderValue $left={text}>{value}</SliderValue>
      </SliderTrack>
      <Grip $side="out" />
    </SliderBox>
  );
}

/* ---------- special nodes ---------- */

const RelayBox = styled.div<{ $x: number }>`
  position: absolute;
  left: ${(p) => p.$x}px;
  top: 521px;
  width: 80px;
  height: 33px;
  border: 2px solid #111;
  border-radius: 14px;
  background: linear-gradient(90deg, #222 0 14px, transparent 14px 62px, #222 62px),
    linear-gradient(#dcdce2, #a6a5b2 30%, #918f9d);
  box-shadow: inset 0 2px 1px rgba(255, 255, 255, 0.45);
`;

const ExpressionBox = styled.div`
  align-self: center;
  height: 81px;
  width: 187px;
  margin-left: 8px;
  flex: none;
  display: flex;
  align-items: center;
  justify-content: center;
  border: 2px solid #333;
  background: linear-gradient(#e8e8ec, #c3c2cc 45%, #b5b4c0);
  font: 26.6px/1 ${monoFont};
  color: #2c2c30;
  white-space: nowrap;
`;

const DofRow = styled.div`
  display: grid;
  grid-template-columns: repeat(6, 52px);
  margin: 3px 0 0 0;
  height: 66px;
`;

const Dof = styled.div`
  display: flex;
  flex-direction: column;
  align-items: center;
  justify-content: space-between;
  padding: 5px 0 1px;
`;

const LegendBox = styled(NodeBox)`
  flex-direction: row;
  border-right: 0;
  border-radius: 7px 0 0 7px;
  padding: 0;
`;

const LegendPorts = styled(PortColumn)`
  width: 28px;
  margin: 2px 0 2px;
`;

const LegendSwatches = styled.div`
  margin: 9px 0 0 11px;
  align-self: flex-start;
  width: 199px;
  display: flex;
  flex-direction: column;
  gap: 2px;
  border: 2px solid #000;
  background: #000;
`;

const Swatch = styled.div<{ $fill: string; $ink: string; $h: number }>`
  height: ${(p) => p.$h}px;
  border: 1.5px solid #fff;
  background: ${(p) => p.$fill};
  color: ${(p) => p.$ink};
  display: flex;
  align-items: center;
  padding: 0 0 2px 12px;
  font-size: 20.6px;
`;

const SwatchValue = styled.span`
  width: 120px;
  text-align: center;
`;

const TornEdge = styled.svg`
  position: absolute;
  right: -2px;
  top: -3px;
  width: 16px;
  height: calc(100% + 6px);
`;

function TearPath({ height }: { height: number }) {
  const steps = Math.round(height / 20);
  const pitch = height / steps;
  const pts: string[] = ["3,0"];
  for (let i = 0; i < steps; i++) {
    pts.push(`13,${(i + 0.45) * pitch}`);
    if (i < steps - 1) pts.push(`3.5,${(i + 0.95) * pitch}`);
  }
  pts.push(`5,${height}`);
  return (
    <>
      <polygon points={`${pts.join(" ")} 16,${height} 16,0`} fill="#f59b8c" />
      <polyline points={pts.join(" ")} fill="none" stroke="#26262a" strokeWidth="2.2" />
    </>
  );
}

type LegendItem = [string, string];

function Legend({ x, y, h, rowH, items }: { x: number; y: number; h: number; rowH: number; items: LegendItem[] }) {
  return (
    <LegendBox $x={x} $y={y} $w={258} $h={h}>
      <LegendPorts>
        {["C", "T", "R"].map((n) => (
          <Port key={n} $side="in">
            <Grip $side="in" />
            {n}
          </Port>
        ))}
      </LegendPorts>
      <LegendSwatches>
        {items.map(([label, fill], i) => (
          <Swatch key={i} $fill={fill} $ink={i === 0 ? "#4d4d00" : "rgba(0,0,0,0.72)"} $h={rowH - 2}>
            {i === 0 ? label : <SwatchValue>{label}</SwatchValue>}
          </Swatch>
        ))}
      </LegendSwatches>
      <TornEdge viewBox={`0 0 16 ${h + 4}`} preserveAspectRatio="none">
        <TearPath height={h + 4} />
      </TornEdge>
    </LegendBox>
  );
}

const beamLegend: LegendItem[] = [
  ["utilization", "#ffff00"],
  ["-6.8%", "#ff0000"],
  ["-5.5%", "#ff2c2c"],
  ["-4.1%", "#ff6464"],
  ["-2.7%", "#ff9292"],
  ["-1.4%", "#ffcdcd"],
  ["0.0%", "#fdfdfb"],
  ["9.8%", "#c8c8ff"],
  ["19.6%", "#9797ff"],
  ["29.4%", "#6262ff"],
  ["39.2%", "#2f2fff"],
  ["49.0%", "#0000ff"],
  ["", "#33cc33"],
];

const shellLegend: LegendItem[] = [
  ["utilization", "#ffff00"],
  ["-4.7%", "#ff0000"],
  ["-3.8%", "#ff3030"],
  ["-2.8%", "#ff6262"],
  ["-1.9%", "#ff9696"],
  ["-0.9%", "#ffc8c8"],
  ["0.0%", "#fffcfb"],
  ["8.3%", "#cacaff"],
  ["16.6%", "#9999ff"],
  ["24.9%", "#6464ff"],
  ["33.2%", "#3131ff"],
  ["41.4%", "#0000ff"],
  ["", "#33cc33"],
];

/* ---------- repeated component kinds ---------- */

const UnitZ = ({ x, y }: { x: number; y: number }) => (
  <Node x={x} y={y} w={126} h={57} ins={["F"]} outs={["V"]} inW={25} outL={91} icon={<IconVectorZ />} />
);

const Material = ({ x, y, w, inW, outL, name }: { x: number; y: number; w: number; inW: number; outL: number; name: string }) => (
  <Node x={x} y={y} w={w} h={393} ins={["Mat", "Name|Ind", "Elem|Id", "Color"]} outs={["Mat"]} inW={inW} outL={outL} portsH={160} icon={<IconMaterial />}>
    <Bars $first>
      <Bar>Select</Bar>
    </Bars>
    <Sheet>
      <FieldLabel>Family</FieldLabel>
      <Drop>Concrete</Drop>
      <FieldLabel>Name</FieldLabel>
      <Drop>{name}</Drop>
    </Sheet>
  </Node>
);

const Trapezoid = ({ x, y }: { x: number; y: number }) => (
  <Node
    x={x}
    y={y}
    w={294.5}
    h={469}
    ins={["Family", "Name", "Elem|Id", "Color", "Material", "Ecce-loc", "Height", "Upper Width", "Lower Width"]}
    outs={["CroSec"]}
    inW={138}
    outL={206}
    portsH={360}
    icon={<IconTrapezoid />}
  >
    <Bars $first>
      <Bar>Cross Section:</Bar>
    </Bars>
    <Sheet>
      <Drop>Trapezoid</Drop>
    </Sheet>
  </Node>
);

const LineToBeam = ({ x }: { x: number }) => (
  <Node x={x} y={627} w={232} h={207} ins={["Line", "Color", "Id", "CroSec"]} outs={["Elem", "Pts", "Info"]} inW={97} outL={166} portsH={160} icon={<IconBeam />}>
    <Bars $first>
      <Bar>
        <Grip $side="in" />
        Options
      </Bar>
    </Bars>
  </Node>
);

const TEAL = "#6eb6b8";

const displayScales: { label: string; on: boolean; value: string; pad: number; first: "value" | "knob" }[] = [
  { label: "Deformation", on: true, value: "3060", pad: 83, first: "value" },
  { label: "Reactions", on: false, value: "1", pad: 42, first: "knob" },
  { label: "Loads", on: true, value: "0.2", pad: 42, first: "knob" },
  { label: "Supports", on: true, value: "0.2", pad: 42, first: "knob" },
  { label: "Local axes", on: false, value: "1", pad: 42, first: "knob" },
  { label: "Joints", on: true, value: "1", pad: 42, first: "knob" },
];

export default function App() {
  return (
    <Viewport>
      <GlobalStyle />
      <Canvas>
        <Group x={222} y={185} w={857} h={403} $fill="#737890" />
        <Group x={2542} y={185} w={1041} h={329} $fill={TEAL} />
        <Group x={1450} y={567} w={1625} h={287} $fill={TEAL} />
        <Group x={3128} y={587} w={459} h={267} $fill={TEAL} />
        <Group x={1450} y={943} w={779} h={533} $fill={TEAL} />
        <Group x={2288} y={947} w={1301} h={533} $fill={TEAL} />
        <Group x={1450} y={1556} w={779} h={602} $fill={TEAL} />
        <Group x={2412} y={1557} w={381} h={293} $fill={TEAL} />
        <Group x={2946} y={1557} w={643} h={429} $fill={TEAL} />
        <Group x={4070} y={200} w={629} h={410} $fill="#98d5c7" />
        <Group x={4886} y={157} w={547} h={209} $fill="#f6d087" />
        <Group x={5641} y={87} w={1220} h={1553} $fill="#f59b8c" />

        <Callout x={446} y={139} w={407} tip={650.6}>Generate Geometry for Beams and Shell</Callout>
        <Callout x={2951} y={139} w={220} tip={3062}>Define Mesh to Shell</Callout>
        <Callout x={2150} y={521} w={223} tip={2262}>Define Line to Beams</Callout>
        <Callout x={3225.5} y={541} w={261.5} tip={3357}>Define Lines for Columns</Callout>
        <Callout x={1746} y={896.6} w={185.4} tip={1839.7}>Set Cross Section</Callout>
        <Callout x={2846} y={901} w={185.4} tip={2939}>Set Cross Section</Callout>
        <Callout x={1746} y={1511} w={185.4} tip={1839.7}>Set Cross Section</Callout>
        <Callout x={2514} y={1511} w={175} tip={2602.6}>Define Supports</Callout>
        <Callout x={3194} y={1511} w={145} tip={3267}>Define Loads</Callout>
        <Callout x={4294.5} y={154.7} w={180} tip={4384}>Assemble Model</Callout>
        <Callout x={5078} y={110.7} w={163} tip={5159.4}>Analyze Model</Callout>
        <Callout x={6180} y={40.7} w={139.5} tip={6251}>View Results</Callout>

        <WireLayer viewBox={`0 0 ${CANVAS_W} ${CANVAS_H}`}>
          {wires.map((w, i) => (
            <Wire key={i} spec={w} id={`wire-${i}`} />
          ))}
        </WireLayer>

        {/* geometry */}
        <Panel x={243} y={249} w={99.5} pad={34}>4</Panel>
        <UnitZ x={405} y={241} />
        <Panel x={243} y={381} w={99.5} pad={27}>20</Panel>
        <Node x={405} y={335} w={127.5} h={129} ins={["P", "X", "Y"]} outs={["P"]} inW={27} outL={96} icon={<IconPlane />} />
        <Node x={924.5} y={205} w={134.5} h={89} ins={["G", "T"]} outs={["G", "X"]} inW={28.5} outL={98.5} icon={<IconMove />} />
        <Node x={924.5} y={351} w={134.5} h={89} ins={["G", "T"]} outs={["G", "X"]} inW={28.5} outL={98.5} icon={<IconMove />} />
        <Node x={669} y={439} w={142} h={129} ins={["S", "U", "V"]} outs={["P", "N", "uv"]} inW={29} outL={98} icon={<IconDivideSurface />} />
        <NumberSlider x={243} y={525} w={346} labelW={105} label="V Count" value="3" from={17} to={220} knob={79} shape="diamond" text={95} hideTo={112} />

        {/* mesh to shell */}
        <Node
          x={2563}
          y={205}
          w={243.5}
          h={289}
          ins={["Brep", "IPts", "MRes", "ERef", "PRed", "SStep", "SIter"]}
          outs={["Mesh", "Info"]}
          inW={102}
          outL={169}
          expand={["IPts"]}
          icon={<IconMeshRed />}
        />
        <Panel x={3168.5} y={341} w={98} pad={14}>roof</Panel>
        <Node x={3334.3} y={255} w={228.6} h={207} ins={["Mesh", "Color", "Id", "CroSec"]} outs={["Elem", "Pts", "Info"]} inW={94} outL={162} portsH={160} icon={<IconShellBlue />}>
          <Bars $first>
            <Bar>
              <Grip $side="in" />
              Options
            </Bar>
          </Bars>
        </Node>

        {/* line to beams */}
        <Node x={1471} y={587} w={133} h={89} ins={["V", "C"]} outs={["Pl"]} inW={26} outL={96} icon={<IconPolyline />} />
        <Node x={1682.6} y={607} w={130} h={89} ins={["C", "R"]} outs={["S", "V"]} inW={27} outL={95} icon={<IconExplode />} />
        <Node x={1918.5} y={663} w={126.5} h={57} ins={["C"]} outs={["L"]} inW={27} outL={96} icon={<IconLength />} />
        <Node x={2133} y={667} w={129.5} h={89} ins={["A", "B"]} outs={["R"]} inW={27} outL={96} icon={<IconDivision />} />
        <NumberSlider x={1724.6} y={737} w={324} labelW={41} label="B" value="1.0" from={17} to={261} knob={43} shape="circle" text={58} hideTo={88} />
        <Node x={2380.3} y={607} w={130} h={129} ins={["C", "N", "K"]} outs={["P", "T", "t"]} inW={29} outL={98} icon={<IconDivideCurve />} />
        <Node x={2600.7} y={607} w={134} h={89} ins={["V", "C"]} outs={["Pl"]} inW={27} outL={96} icon={<IconPolyline />} />
        <Panel x={2621} y={711} w={111} pad={13}>beams</Panel>
        <LineToBeam x={2822.5} />

        <RelayBox $x={3069} />
        <RelayBox $x={3860} />

        {/* lines for columns */}
        <Node x={3156.3} y={607} w={126} h={89} ins={["A", "B"]} outs={["L"]} inW={27.5} outL={96} icon={<IconLine />} />
        <Panel x={3148.5} y={711} w={138} pad={13}>columns</Panel>
        <LineToBeam x={3334.5} />

        {/* cross sections */}
        <Panel x={1759} y={1247} w={99.5} h={42} pad={27}>50</Panel>
        <Material x={1471} y={1063} w={294} inW={137} outL={206} name="C30/37" />
        <Trapezoid x={1914} y={963} />

        <Material x={2308.7} y={1067} w={234.5} inW={108} outL={175} name="C30/37" />
        <Panel x={2604} y={1211} w={101} pad={28}>80</Panel>
        <NodeBox $x={2733} $y={1051} $w={284.5} $h={89}>
          <Ports $in={23} $out={35}>
            <PortColumn>
              <Port $side="in"><Grip $side="in" />x</Port>
              <Port $side="in"><Grip $side="in" />y</Port>
            </PortColumn>
            <IconCell>
              <ExpressionBox>-(x/2-y/2)</ExpressionBox>
            </IconCell>
            <PortColumn>
              <Port $side="out">R<Grip $side="out" /></Port>
            </PortColumn>
          </Ports>
        </NodeBox>
        <UnitZ x={3067} y={1067} />
        <Node x={3098.3} y={1287} w={101} h={49} ins={[""]} outs={[""]} inW={24} outL={77} icon={<IconNumber />} />
        <Trapezoid x={3274.5} y={967} />

        <Material x={1471} y={1677} w={294} inW={137} outL={206} name="C20/25" />
        <Node
          x={1934.5}
          y={1577}
          w={274}
          h={349}
          ins={["Family", "Name", "Elem|Id", "Color", "Material", "Height"]}
          outs={["CroSec"]}
          inW={106}
          outL={173.5}
          portsH={240}
          icon={<IconShellSection />}
        >
          <Bars $first>
            <Bar>Cross Section:</Bar>
          </Bars>
          <Sheet>
            <Drop>Shell Const</Drop>
          </Sheet>
        </Node>
        <NumberSlider x={1471} y={2097} w={380} labelW={141} label="Height [cm]" value="34" from={18} to={219} knob={87} shape="diamond" text={102} hideTo={128} />

        {/* supports */}
        <Node x={2432.5} y={1577} w={340.5} h={253} ins={["Pos|Ind", "Plane", "Dofs"]} outs={["Supp"]} inW={144} outL={212} portsH={120} icon={<IconSupport />}>
          <Bars $first>
            <Bar>Conditions</Bar>
          </Bars>
          <Sheet>
            <DofRow>
              {["Tx", "Ty", "Tz", "Rx", "Ry", "Rz"].map((d) => (
                <Dof key={d}>
                  {d}
                  <Radio $on />
                </Dof>
              ))}
            </DofRow>
          </Sheet>
        </Node>

        {/* loads */}
        <Panel x={2966.6} y={1585} w={99.5} pad={26}>-3</Panel>
        <UnitZ x={3127.4} y={1577} />
        <Node x={3314} y={1581} w={254.5} h={385} ins={["Vec", "Mesh", "ElemIds", "AddPos", "LCase"]} outs={["Load"]} inW={104} outL={172} portsH={200} icon={<IconMeshLoad />}>
          <Bars $first>
            <Bar>Orientation</Bar>
            <Bar>Generation</Bar>
            <Bar>Type of Load:</Bar>
          </Bars>
          <Sheet>
            <Drop>MeshLoad Const</Drop>
          </Sheet>
        </Node>

        {/* assemble */}
        <Node
          x={4090}
          y={221}
          w={307}
          h={369}
          ins={["Pt", "Elem", "Support", "Load", "CroSec", "Material", "Joint", "Set", "LDist"]}
          outs={["Model", "Info", "Mass", "COG", "LCNames"]}
          inW={127}
          outL={194.5}
          expand={["Elem", "Support"]}
          icon={<IconAssemble />}
        />
        <ListPanel x={4443} y={359} w={236.5} h={99} path="{0;0}" value="460000.0" />

        {/* analyze */}
        <Node x={4906} y={177} w={247} h={169} ins={["Model"]} outs={["Model", "Disp", "G", "DEnergy"]} inW={76.5} outL={144} icon={<IconAnalyze />} />
        <ListPanel x={5239} y={237} w={174} h={95} path="{0;0;0}" value="0.042181" />

        {/* results */}
        <Node
          x={5660.3}
          y={177}
          w={306.7}
          h={1010}
          ins={["Model", "DispDir", "R-Factors", "ResCase", "Colors", "Ids|Breps"]}
          outs={["Model", "defMesh", "defAxes", "defModel"]}
          inW={115.5}
          outL={184}
          portsH={240}
          icon={<IconModelView />}
        >
          <Bars $first>
            <Bar>Display Scales</Bar>
          </Bars>
          <Sheet>
            {displayScales.map((s) => (
              <React.Fragment key={s.label}>
                <OptionRow>
                  <span>{s.label}</span>
                  <Check $on={s.on} />
                </OptionRow>
                <KnobSlider value={s.value} pad={s.pad} first={s.first} />
              </React.Fragment>
            ))}
          </Sheet>
          <Bars>
            <Bar>Render Settings</Bar>
            <Bar>Tags</Bar>
            <Bar>Cross Section Color</Bar>
            <Bar>Result-Case</Bar>
          </Bars>
          <Sheet>
            <Drop>--all--</Drop>
          </Sheet>
        </Node>

        <Node x={6200.5} y={107} w={270.5} h={787} tone="light" ins={["Model"]} outs={["Model", "Mesh", "Curves", "Legend C", "Legend T"]} inW={83.5} outL={151.5} portsH={200} icon={<IconBeamView />}>
          <Bars $first>
            <Bar>Section Forces</Bar>
          </Bars>
          <Sheet $tone="light">
            <OptionRow><span>Filled</span><Check /></OptionRow>
            <OptionRow><span>Numbers</span><Check /></OptionRow>
            <OptionRow><span>Scale [kN] to [m]</span></OptionRow>
            <KnobSlider value="0.5" pad={57} first="value" />
            <OptionRow><span>Scale [kNm] to [m]</span></OptionRow>
            <KnobSlider value="0.5" pad={57} first="value" />
            {["Mx", "My", "Mz", "Nx", "Vy", "Vz"].map((n) => (
              <OptionRow key={n}><span>{n}</span><Check /></OptionRow>
            ))}
          </Sheet>
          <Bars>
            <Bar>Render Settings</Bar>
          </Bars>
        </Node>

        <Node x={6198.2} y={913} w={276.6} h={707} tone="light" ins={["Model", "LayerInd"]} outs={["Model", "Mesh", "Legend C", "Legend T"]} inW={96} outL={164} portsH={160} icon={<IconShellView />}>
          <Bars $first>
            <Bar>Display Scales</Bar>
            <Bar>Render Settings</Bar>
          </Bars>
          <Sheet $tone="light">
            {["Cross section", "Thickness", "Utilization", "Displacement", "Princ. Stress 1", "Princ. Stress 2", "Equivalent Stress"].map((n) => (
              <OptionRow key={n}>
                <span>{n}</span>
                <Radio $on={n === "Utilization"} />
              </OptionRow>
            ))}
            <OptionRow><span>Position of results</span></OptionRow>
            <KnobSlider value="0" pad={80} first="value" />
            <OptionRow><span>Princ. Stress 1-2</span><Check /></OptionRow>
            <KnobSlider value="1" pad={35} first="knob" />
          </Sheet>
        </Node>

        <Legend x={6590.5} y={159} h={543} rowH={39.9} items={beamLegend} />
        <Legend x={6590.5} y={923} h={555} rowH={40.8} items={shellLegend} />
      </Canvas>
    </Viewport>
  );
}
